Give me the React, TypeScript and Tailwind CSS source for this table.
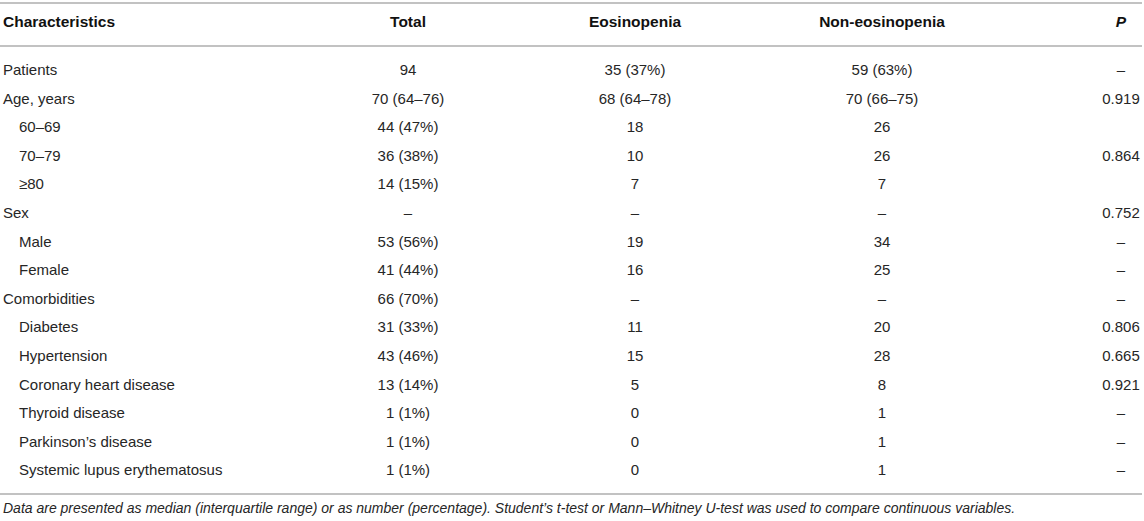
import React from "react";

type Row = {
  label: string;
  sub?: boolean;
  total: string;
  eos: string;
  non: string;
  p: string;
};

const rows: Row[] = [
  { label: "Patients", total: "94", eos: "35 (37%)", non: "59 (63%)", p: "–" },
  { label: "Age, years", total: "70 (64–76)", eos: "68 (64–78)", non: "70 (66–75)", p: "0.919" },
  { label: "60–69", sub: true, total: "44 (47%)", eos: "18", non: "26", p: "" },
  { label: "70–79", sub: true, total: "36 (38%)", eos: "10", non: "26", p: "0.864" },
  { label: "≥80", sub: true, total: "14 (15%)", eos: "7", non: "7", p: "" },
  { label: "Sex", total: "–", eos: "–", non: "–", p: "0.752" },
  { label: "Male", sub: true, total: "53 (56%)", eos: "19", non: "34", p: "–" },
  { label: "Female", sub: true, total: "41 (44%)", eos: "16", non: "25", p: "–" },
  { label: "Comorbidities", total: "66 (70%)", eos: "–", non: "–", p: "–" },
  { label: "Diabetes", sub: true, total: "31 (33%)", eos: "11", non: "20", p: "0.806" },
  { label: "Hypertension", sub: true, total: "43 (46%)", eos: "15", non: "28", p: "0.665" },
  { label: "Coronary heart disease", sub: true, total: "13 (14%)", eos: "5", non: "8", p: "0.921" },
  { label: "Thyroid disease", sub: true, total: "1 (1%)", eos: "0", non: "1", p: "–" },
  { label: "Parkinson’s disease", sub: true, total: "1 (1%)", eos: "0", non: "1", p: "–" },
  { label: "Systemic lupus erythematosus", sub: true, total: "1 (1%)", eos: "0", non: "1", p: "–" },
];

// column grid shared by header and body
const cols = "grid grid-cols-[300px_216px_238px_256px_132px]";

const App = () => {
  return (
    <div
      className="w-[1144px] h-[521px] bg-white pt-[2px] text-[#262626]"
      style={{ fontFamily: '"Liberation Sans", Arial, Helvetica, sans-serif' }}
    >
      <div className="w-[1142px]">
        <div className="h-[2px] bg-[#c2c2c2]" />
        <div className={cols + " h-[41px] pt-[8px] text-[15.5px] leading-[20px] font-bold text-[#111]"}>
          <div className="pl-[3px]">Characteristics</div>
          <div className="text-center">Total</div>
          <div className="text-center">Eosinopenia</div>
          <div className="text-center">Non-eosinopenia</div>
          <div className="flex justify-end">
            <span className="w-[42px] text-center italic">P</span>
          </div>
        </div>
        <div className="h-[2px] bg-[#c2c2c2]" />

        <div className="pt-[9px] pb-[8px] text-[15px]">
          {rows.map((r, i) => (
            <div key={i} className={cols + " h-[28.6px] leading-[28.6px]"}>
              <div className={r.sub ? "pl-[19px]" : "pl-[3px]"}>{r.label}</div>
              <div className="text-center">{r.total}</div>
              <div className="text-center">{r.eos}</div>
              <div className="text-center">{r.non}</div>
              <div className="flex justify-end">
                <span className="w-[42px] text-center">{r.p}</span>
              </div>
            </div>
          ))}
        </div>

        <div className="h-[2px] bg-[#c2c2c2]" />
        <p className="pl-[3px] pt-[3px] text-[14px] leading-[20px] italic text-[#262626]">
          Data are presented as median (interquartile range) or as number (percentage). Student’s t-test or
          Mann–Whitney U-test was used to compare continuous variables.
        </p>
      </div>
    </div>
  );
};

export default App;
